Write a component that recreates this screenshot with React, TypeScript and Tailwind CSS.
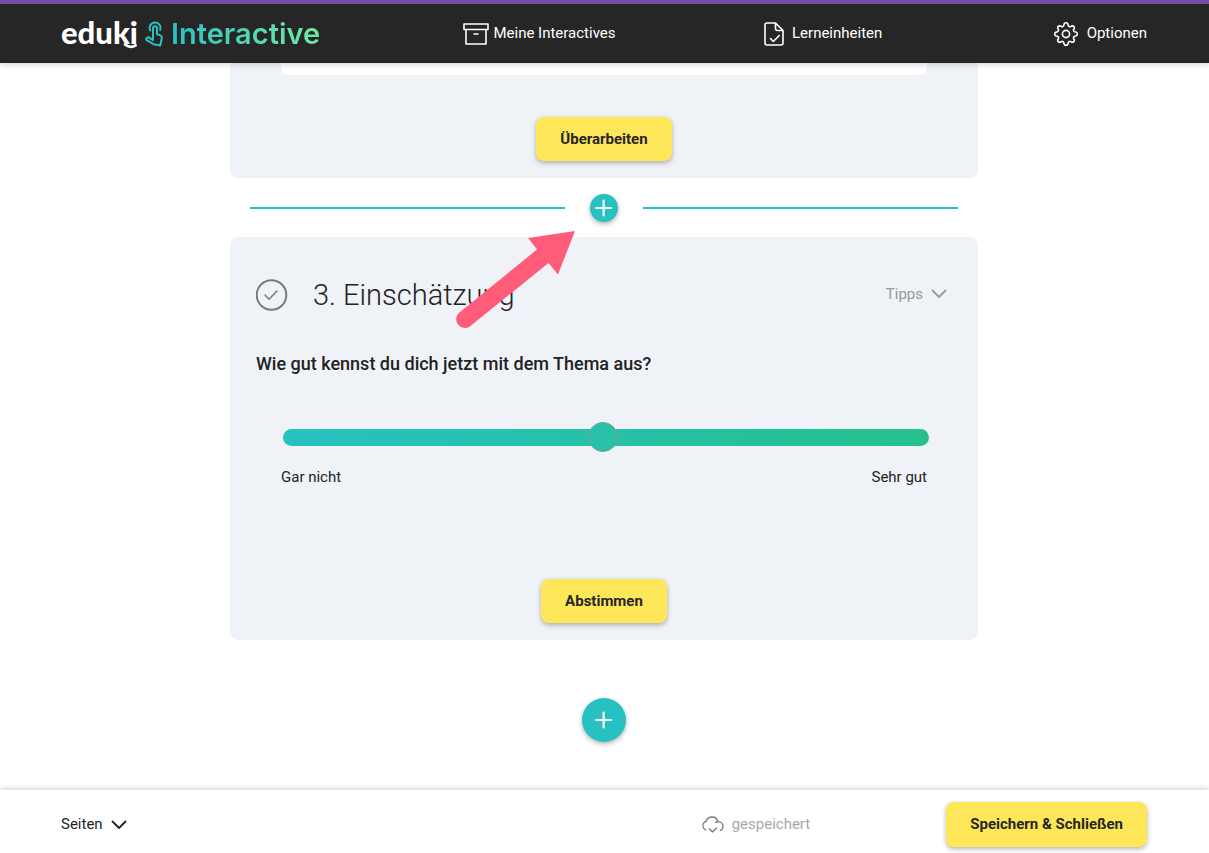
import React, { useState } from "react";

const yellowButton =
  "flex items-center justify-center rounded-lg bg-[#fde658] px-6 text-[15px] font-bold text-[#262626] shadow-[0_2px_5px_rgba(0,0,0,0.3)]";

function Plus({ size }: { size: number }) {
  return (
    <svg width={size} height={size} viewBox="0 0 18 18" fill="none" stroke="white" strokeWidth="2.200" strokeLinecap="round" aria-hidden="true">
      <path d="M8.600 1.500v15M1.100 9h15" />
    </svg>
  );
}

function Chevron() {
  return (
    <svg width="16" height="10" viewBox="0 0 16 10" fill="none" stroke="currentColor" strokeWidth="1.8" strokeLinecap="round" strokeLinejoin="round" aria-hidden="true">
      <path d="M1.500 1.500 8 8l6.500-6.500" />
    </svg>
  );
}

function Logo() {
  return (
    <a href="#" className="flex items-center" aria-label="eduki Interactive">
      <span className="relative w-[84px] pb-[3px] font-[Lato,sans-serif] text-[31px] leading-[44px] font-black text-white">
        eduki
        <svg className="absolute top-[30px] left-[60px]" width="18" height="10" viewBox="0 0 18 10" fill="none" stroke="white" strokeWidth="2.800" strokeLinecap="round" aria-hidden="true">
          <path d="M4 4.500C7.500 7.200 11.500 7.300 14.500 5.300" />
        </svg>
      </span>
      <svg width="18" height="26" viewBox="0 0 18 26" fill="none" stroke="#28c1c1" strokeWidth="2" strokeLinecap="round" strokeLinejoin="round" aria-hidden="true">
        <path d="M5.200 9.500A5.500 5.500 0 1 1 15.200 9" />
        <path d="M8 16.500V7.200a2 2 0 0 1 4 0v6l2.800.9c1.500.5 2.200 1.600 1.900 3.100l-1.400 7.300-6.800-1.300L2 19.400c-1.200-.9-.9-2.700.7-3 1-.2 2 .3 2.700 1L8 19.200v-3" />
      </svg>
      <span className="ml-[8px] bg-linear-to-r from-[#28c1c1] to-[#70eaa0] bg-clip-text font-[Inter,sans-serif] text-[29px] leading-[44px] font-semibold text-transparent">
        Interactive
      </span>
    </a>
  );
}

function Header() {
  return (
    <header className="relative z-10 border-t-4 border-[#7550a0] bg-[#262626] pr-[62px] pl-[61px] text-[15px] text-white shadow-[0_1px_6px_rgba(0,0,0,0.2)]">
      <nav className="grid h-[59px] grid-cols-[403fr_301fr_289fr_auto] items-center">
        <Logo />
        <a href="#" className="flex items-center gap-1">
          <svg width="26" height="22" viewBox="0 0 26 22" fill="none" stroke="currentColor" strokeWidth="1.6" strokeLinejoin="round" aria-hidden="true">
            <path d="M1 1h24v5.500H1zM3 6.500h20V21H3zM10.500 11h5" />
          </svg>
          Meine Interactives
        </a>
        <a href="#" className="flex items-center gap-2">
          <svg width="20" height="24" viewBox="0 0 20 24" fill="none" stroke="currentColor" strokeWidth="1.6" strokeLinecap="round" strokeLinejoin="round" aria-hidden="true">
            <path d="M11.500 1H3a2 2 0 0 0-2 2v18a2 2 0 0 0 2 2h14a2 2 0 0 0 2-2V8.500zM11.500 1v5.500a2 2 0 0 0 2 2H19M6.500 16.500l2.800 3 6-6" />
          </svg>
          Lerneinheiten
        </a>
        <button type="button" className="flex items-center gap-2">
          <svg width="26" height="26" viewBox="0 0 26 26" fill="none" stroke="currentColor" strokeWidth="1.6" strokeLinejoin="round" aria-hidden="true">
            <circle cx="13" cy="13" r="3.600" />
            <path d="M11 3.300a2.050 2.050 0 0 1 4 0l.3 1.200a1.800 1.800 0 0 0 2.500 1l1-.6a2.050 2.050 0 0 1 2.500 2.500l-.7 1a1.800 1.800 0 0 0 1 2.400l1.300.3a2.050 2.050 0 0 1 0 3.900l-1.300.3a1.800 1.800 0 0 0-1 2.400l.7 1a2.050 2.050 0 0 1-2.500 2.500l-1-.6a1.800 1.800 0 0 0-2.500 1l-.3 1.200a2.050 2.050 0 0 1-4 0l-.3-1.200a1.800 1.800 0 0 0-2.500-1l-1 .6a2.050 2.050 0 0 1-2.500-2.500l.7-1a1.800 1.800 0 0 0-1-2.400l-1.300-.3a2.050 2.050 0 0 1 0-3.900l1.300-.3a1.800 1.800 0 0 0 1-2.400l-.7-1a2.050 2.050 0 0 1 2.500-2.500l1 .6a1.800 1.800 0 0 0 2.500-1z" />
          </svg>
          Optionen
        </button>
      </nav>
    </header>
  );
}

function Pointer() {
  return (
    <svg className="pointer-events-none absolute -top-[6px] left-[225px]" width="120" height="98" viewBox="0 0 120 98" fill="#ff5c7a" aria-hidden="true">
      <path d="M120 0 73 7l9 11.500L3.500 82.200a8.800 8.800 0 0 0 11 13.500L93.500 32 103 43.500z" />
    </svg>
  );
}

function RatingTask() {
  const [value, setValue] = useState(99);
  return (
    <section className="relative rounded-lg bg-[#eff3f8] px-[26px] pt-[36px] pb-4">
      <div className="flex h-11 items-center">
        <svg width="32" height="32" viewBox="0 0 32 32" fill="none" stroke="#7a7a7a" strokeLinecap="round" strokeLinejoin="round" aria-hidden="true">
          <circle cx="15.500" cy="16" r="14.800" strokeWidth="2" />
          <path d="m9 16 4 4.300 8-8.300" strokeWidth="1.500" />
        </svg>
        <h2 className="ml-[25px] flex-1 text-[29px] leading-[44px] font-light">3. Einschätzung</h2>
        <button type="button" className="mr-[5px] flex items-center gap-2 pb-0.5 text-[15px] text-[#999]">
          Tipps <Chevron />
        </button>
      </div>
      <label htmlFor="rating" className="mt-[33px] block text-[18px] leading-[28px] font-medium">
        Wie gut kennst du dich jetzt mit dem Thema aus?
      </label>
      <div className="mt-[51px] px-[25px]">
        <input
          id="rating"
          type="range"
          min={0}
          max={200}
          value={value}
          onChange={(e) => setValue(Number(e.target.value))}
          className="ml-0.5 block h-[17px] w-full appearance-none rounded-full bg-linear-to-r from-[#28c1c1] to-[#26c08c] [&::-webkit-slider-runnable-track]:h-[17px] [&::-webkit-slider-thumb]:-mt-[7px] [&::-webkit-slider-thumb]:size-[30px] [&::-webkit-slider-thumb]:appearance-none [&::-webkit-slider-thumb]:rounded-full [&::-webkit-slider-thumb]:border [&::-webkit-slider-thumb]:border-[#7f9c98] [&::-webkit-slider-thumb]:bg-[#27c0a8]"
        />
        <div className="mt-5 flex justify-between text-[15px] leading-[22px]">
          <span>Gar nicht</span>
          <span>Sehr gut</span>
        </div>
      </div>
      <div className="mt-[91px] mb-px flex justify-center">
        <button type="button" className={`${yellowButton} h-11`}>Abstimmen</button>
      </div>
      <Pointer />
    </section>
  );
}

export default function App() {
  return (
    <div className="flex h-screen flex-col bg-white font-[Roboto,sans-serif] text-[#222]">
      <Header />
      <main className="min-h-0 flex-1 overflow-hidden pr-px">
        <div className="mx-auto max-w-[748px]">
          <section className="rounded-b-lg bg-[#eff3f8] px-[51px] pb-[17px]">
            <div className="h-3 rounded-b-lg bg-white" />
            <div className="mt-[42px] flex justify-center">
              <button type="button" className={`${yellowButton} h-11`}>Überarbeiten</button>
            </div>
          </section>
          <div className="flex h-[59px] items-center gap-[25px] px-5">
            <hr className="flex-1 border-t-2 border-[#28c1c1]" />
            <button type="button" aria-label="+" className="flex size-7 items-center justify-center rounded-full bg-[#28c1c1] shadow-[0_2px_5px_rgba(0,0,0,0.3)]">
              <Plus size={18} />
            </button>
            <hr className="flex-1 border-t-2 border-[#28c1c1]" />
          </div>
          <RatingTask />
          <div className="mt-[58px] flex justify-center">
            <button type="button" aria-label="+" className="flex size-11 items-center justify-center rounded-full bg-[#28c1c1] shadow-[0_2px_5px_rgba(0,0,0,0.3)]">
              <Plus size={18} />
            </button>
          </div>
        </div>
      </main>
      <footer className="relative flex h-[63px] items-center bg-white pt-[6px] pr-[62px] pl-[61px] text-[15px] shadow-[0_-1px_6px_rgba(0,0,0,0.2)]">
        <button type="button" className="flex items-center gap-2">
          Seiten <Chevron />
        </button>
        <div className="mr-[136px] ml-auto flex items-center gap-2 text-[#a8a8a8]">
          <svg width="22" height="18" viewBox="0 0 22 18" fill="none" stroke="#777" strokeWidth="1.300" strokeLinecap="round" strokeLinejoin="round" aria-hidden="true">
            <path d="M3.500 14C.8 12 .2 9 1.800 6.800 2.400 6 3.200 5.600 4 5.500 5 2.500 7.500 1 10 1c3 0 5.200 1.800 6 4.600 2.800.1 5 2 5 4.800 0 2-1 3.400-2.800 4.100M16 5.600c-.9 0-1.700.2-2.400.7M7.500 13l3 3 4-4" />
          </svg>
          gespeichert
        </div>
        <button type="button" className={`${yellowButton} h-[45px]`}>Speichern &amp; Schließen</button>
      </footer>
    </div>
  );
}
